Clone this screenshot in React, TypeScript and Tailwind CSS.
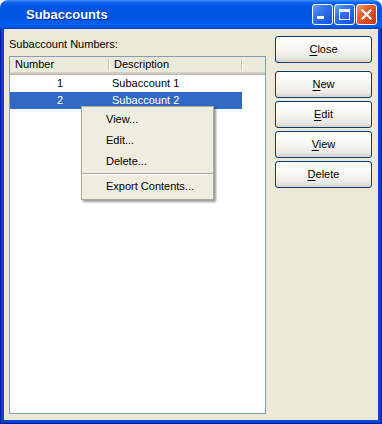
import type { ReactNode } from "react";

const rows = [
  { num: "1", desc: "Subaccount 1" },
  { num: "2", desc: "Subaccount 2" },
];

const actions = ["New", "Edit", "View", "Delete"];

const menuItems = ["View...", "Edit...", "Delete..."];

function Mnemonic({ label }: { label: string }) {
  return (
    <span>
      <span className="underline underline-offset-[2px]">{label[0]}</span>
      {label.slice(1)}
    </span>
  );
}

function XpButton({ children }: { children: ReactNode }) {
  return (
    <button className="h-[27px] w-full rounded-[3px] border border-[#003C74] bg-[linear-gradient(180deg,#FFFFFF_0%,#F7F7F3_45%,#ECEBE5_80%,#D8D3C8_100%)] text-[11px] leading-none text-black flex items-center justify-center">
      {children}
    </button>
  );
}

function CaptionButton({ kind }: { kind: "min" | "max" | "close" }) {
  if (kind === "close") {
    return (
      <div className="w-[21px] h-[21px] rounded-[3px] border border-white bg-[linear-gradient(135deg,#F2A080_0%,#E5602F_35%,#D8461C_70%,#C83A14_100%)] flex items-center justify-center">
        <svg width="11" height="11" viewBox="0 0 11 11">
          <path d="M1.5 1.5 L9.5 9.5 M9.5 1.5 L1.5 9.5" stroke="white" strokeWidth="2.2" strokeLinecap="square" />
        </svg>
      </div>
    );
  }
  return (
    <div className="w-[21px] h-[21px] rounded-[3px] border border-white bg-[linear-gradient(135deg,#6FA2FB_0%,#3576F0_35%,#1F5EE0_75%,#1A52CF_100%)] relative">
      {kind === "min" ? (
        <div className="absolute left-[4px] top-[11px] w-[7px] h-[3px] bg-white" />
      ) : (
        <div className="absolute left-[4px] top-[4px] w-[11px] h-[11px] border border-white border-t-[3px]" />
      )}
    </div>
  );
}

export default function App() {
  return (
    <div className="relative w-[382px] h-[424px] bg-white font-['Liberation_Sans',Arial,sans-serif] text-[11px] text-black">
      <div className="flex flex-col w-full h-full rounded-t-[8px] overflow-hidden">
        {/* title bar */}
        <div className="h-[29px] shrink-0 flex items-center pl-[26px] pr-[5px] bg-[linear-gradient(180deg,#3D8EFA_0%,#0A5FEE_10%,#0055E5_25%,#0054E3_60%,#005FF2_85%,#0053E0_94%,#003FC4_100%)]">
          <span className="text-[13px] font-bold text-white [text-shadow:1px_1px_#0A2A9A] leading-none">
            Subaccounts
          </span>
          <div className="ml-auto flex gap-[1px]">
            <CaptionButton kind="min" />
            <CaptionButton kind="max" />
            <CaptionButton kind="close" />
          </div>
        </div>

        {/* frame + client */}
        <div className="flex-1 flex bg-[#0842D6] border-x border-b border-[#0019A8] px-[3px] pb-[3px]">
          <div className="flex-1 flex bg-[#ECE9D8] pl-[5px] pr-[6px]">
            <div className="w-[257px] flex flex-col pt-[9px] pb-[6px]">
              <div className="leading-[13px] mb-[5px]">Subaccount Numbers:</div>
              <div className="flex-1 border border-[#7F9DB9] bg-white">
                <div className="h-[18px] flex bg-[#EBEADB] shadow-[inset_0_-1px_#C1BCAE,inset_0_-2px_#CBC7B8,inset_0_-3px_#D6D2C2] pb-[3px]">
                  <div className="w-[98px] pl-[5px] flex items-center">Number</div>
                  <div className="w-[2px] mt-[2px] mb-[1px] flex">
                    <div className="w-px bg-[#C7C5B2]" />
                    <div className="w-px bg-white" />
                  </div>
                  <div className="w-[131px] pl-[4px] flex items-center">Description</div>
                  <div className="w-[2px] mt-[2px] mb-[1px] flex">
                    <div className="w-px bg-[#C7C5B2]" />
                    <div className="w-px bg-white" />
                  </div>
                </div>
                {rows.map((r, i) => (
                  <div
                    key={r.num}
                    className={
                      i === 1
                        ? "w-[232px] h-[17px] flex items-center bg-[#316AC5] text-white"
                        : "w-[232px] h-[17px] flex items-center"
                    }
                  >
                    <div className="w-[100px] text-center">{r.num}</div>
                    <div className="pl-[2px]">{r.desc}</div>
                  </div>
                ))}
              </div>
            </div>

            <div className="ml-[9px] w-[97px] flex flex-col pt-[7px]">
              <XpButton>
                <Mnemonic label="Close" />
              </XpButton>
              <div className="mt-[8px] flex flex-col gap-[3px]">
                {actions.map((a) => (
                  <XpButton key={a}>
                    <Mnemonic label={a} />
                  </XpButton>
                ))}
              </div>
            </div>
          </div>
        </div>
      </div>

      {/* context menu */}
      <div className="absolute left-[81px] top-[106px] w-[133px] bg-[#EFECE0] border border-[#ACA899] py-[2px] shadow-[2px_2px_2px_rgba(0,0,0,0.4)]">
        {menuItems.map((m) => (
          <div key={m} className="h-[21px] flex items-center pl-[24px]">
            {m}
          </div>
        ))}
        <div className="my-[1px] border-t border-[#ACA899] border-b border-b-white" />
        <div className="h-[21px] flex items-center pl-[24px]">Export Contents...</div>
      </div>
    </div>
  );
}
